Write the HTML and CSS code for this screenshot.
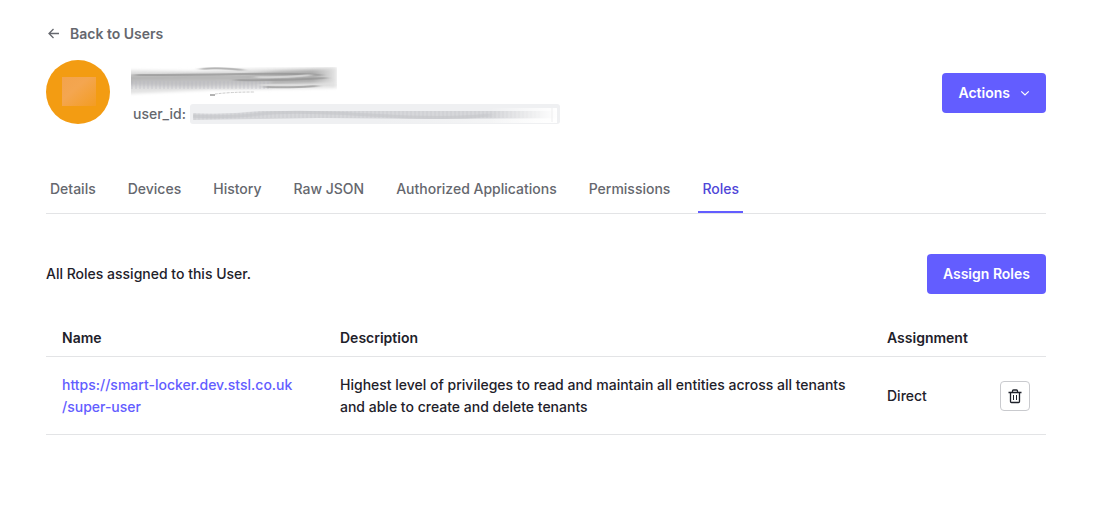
FILE: index.html
```html
<!DOCTYPE html>
<html lang="en">
<head>
<meta charset="utf-8">
<title>User roles</title>
<link rel="stylesheet" href="styles.css">
</head>
<body>
<main class="page">
  <a class="back" href="#">
    <svg class="back-icon" viewBox="0 0 16 16" aria-hidden="true"><path d="M13 7.500H3M7.500 3L3 7.500l4.500 4.500"/></svg>
    Back to Users
  </a>

  <header class="profile">
    <div class="avatar">
      <svg viewBox="0 0 64 64" aria-hidden="true">
        <defs>
          <linearGradient id="patch" x1="0" y1="0" x2="1" y2="1">
            <stop offset="0" stop-color="#f3a34c"/>
            <stop offset=".4" stop-color="#f4a650"/>
            <stop offset="1" stop-color="#f39c22"/>
          </linearGradient>
        </defs>
        <rect x="16" y="17" width="34" height="29" fill="url(#patch)"/>
      </svg>
    </div>
    <div class="identity">
      <svg class="name-smudge" viewBox="0 0 208 32" preserveAspectRatio="none" role="img" aria-label="Name hidden">
        <defs>
          <filter id="soft" filterUnits="userSpaceOnUse" x="-20" y="-10" width="250" height="52"><feGaussianBlur stdDeviation="2 1.500"/></filter>
          <filter id="fine" filterUnits="userSpaceOnUse" x="-20" y="-10" width="420" height="52"><feGaussianBlur stdDeviation="3 .7"/></filter>
          <linearGradient id="ink" x1="0" x2="1">
            <stop offset="0" stop-color="#b4b4b4"/>
            <stop offset=".5" stop-color="#b8b8b8"/>
            <stop offset=".9" stop-color="#acacac"/>
            <stop offset="1" stop-color="#dcdcdc"/>
          </linearGradient>
          <pattern id="ribs" width="4" height="8" patternUnits="userSpaceOnUse"><path d="M1 0V8" stroke="#b4b4be" stroke-width="1"/></pattern>
          <clipPath id="nameClip"><rect x="0" y="1" width="206" height="31"/></clipPath>
        </defs>
        <g clip-path="url(#nameClip)">
          <path d="M-6 4L60 5L110 3L206 1V22L150 23L80 24L-6 28Z" fill="#e2e2e2" filter="url(#soft)"/>
          <path d="M-6 9L60 8L110 8L150 5L202 3V16L150 18L60 20L-6 19Z" fill="url(#ink)" filter="url(#soft)"/>
          <path d="M0 14H140V22H0Z" fill="#cfcfd2" opacity=".5" filter="url(#soft)"/>
          <path d="M0 15H140V23H0Z" fill="url(#ribs)" opacity=".5"/>
          <path d="M70 3Q88 1 112 4" fill="none" stroke="#b5b5b5" stroke-width="2" filter="url(#fine)"/>
          <path d="M4 9Q60 9 110 8T190 9M105 14Q140 15 195 12" fill="none" stroke="#929292" stroke-width="2" opacity=".65" filter="url(#fine)"/>
          <path d="M125 11Q150 12 180 9M130 19H200" fill="none" stroke="#dedede" stroke-width="2" opacity=".8" filter="url(#fine)"/>
          <path d="M135 21Q160 22 186 20" fill="none" stroke="#777" stroke-width="2" opacity=".7" stroke-dasharray="3 1" filter="url(#fine)"/>
          <path d="M79 29H84" stroke="#666" stroke-width="1"/>
          <path d="M84 28Q100 26 124 26" fill="none" stroke="#ccc" stroke-width="1" stroke-dasharray="3 1"/>
        </g>
      </svg>
      <div class="id-row">
        <span>user_id:</span>
        <span class="id-chip">
          <svg viewBox="0 0 370 20" preserveAspectRatio="none" role="img" aria-label="User ID hidden">
            <defs>
              <linearGradient id="fade" x1="0" x2="1">
                <stop offset="0" stop-color="#fff" stop-opacity="0"/>
                <stop offset="1" stop-color="#fff"/>
              </linearGradient>
              <linearGradient id="under" x1="0" x2="1">
                <stop offset="0" stop-color="#f1f2f3" stop-opacity="0"/>
                <stop offset="1" stop-color="#fafafa"/>
              </linearGradient>
              <pattern id="idRibs" width="4" height="8" patternUnits="userSpaceOnUse"><path d="M1 0V8" stroke="#b9bac0" stroke-width="1"/></pattern>
              <clipPath id="idClip"><rect x="3" y="3" width="364" height="16"/></clipPath>
            </defs>
            <g clip-path="url(#idClip)">
              <path d="M180 15H366V19H180Z" fill="url(#under)"/>
              <path d="M-3 9Q35 11 70 7H366V14L240 15L130 14L70 15L-3 16Z" fill="#d6d7da" filter="url(#fine)"/>
              <path d="M3 9Q35 11 70 7H350V14H70L3 16Z" fill="url(#idRibs)" opacity=".35"/>
              <path d="M-3 12Q40 14 70 10T180 11T300 11" fill="none" stroke="#c5c6ca" stroke-width="3" opacity=".6" filter="url(#fine)"/>
              <rect x="300" y="4" width="67" height="15" fill="url(#fade)"/>
              <path d="M362 4V18" stroke="#eeeeef" stroke-width="1"/>
            </g>
          </svg>
        </span>
      </div>
    </div>
    <button class="button" type="button">
      Actions
      <svg class="chevron" viewBox="0 0 12 12" aria-hidden="true"><path d="M1.500 4L6 8.300 10.500 4"/></svg>
    </button>
  </header>

  <nav class="tabs" aria-label="User sections">
    <a class="tab" href="#">Details</a>
    <a class="tab" href="#">Devices</a>
    <a class="tab" href="#">History</a>
    <a class="tab" href="#">Raw JSON</a>
    <a class="tab" href="#">Authorized Applications</a>
    <a class="tab" href="#">Permissions</a>
    <a class="tab tab-active" href="#" aria-current="page">Roles</a>
  </nav>

  <div class="toolbar">
    <p class="toolbar-text">All Roles assigned to this User.</p>
    <button class="button" type="button">Assign Roles</button>
  </div>

  <table class="roles">
    <colgroup><col class="col-name"><col><col class="col-assignment"><col class="col-action"></colgroup>
    <thead>
      <tr><th scope="col">Name</th><th scope="col">Description</th><th scope="col">Assignment</th><td></td></tr>
    </thead>
    <tbody>
      <tr>
        <td><a class="role-link" href="#">https://smart-locker.dev.stsl.co.uk<wbr>/super-user</a></td>
        <td>Highest level of privileges to read and maintain all entities across all tenants and able to create and delete tenants</td>
        <td>Direct</td>
        <td>
          <button class="delete" type="button" aria-label="Remove role">
            <svg viewBox="0 0 16 16" aria-hidden="true"><path d="M1.500 4.500h13M5.500 4.500V3Q5.500 2 6.500 2H9.500Q10.500 2 10.500 3V4.500M3.500 4.500V13.500Q3.500 14.500 4.500 14.500H11.500Q12.500 14.500 12.500 13.500V4.500"/><path class="thin" d="M6.500 7v5M9.500 7v5"/></svg>
          </button>
        </td>
      </tr>
    </tbody>
  </table>
</main>
</body>
</html>
```

FILE: styles.css
```css
* {
  box-sizing: border-box;
}

body {
  margin: 0;
  background: #fff;
  color: #1e212a;
  font: 500 14px/22px Inter, "Liberation Sans", sans-serif;
}

a {
  color: inherit;
  text-decoration: none;
}

.page {
  padding: 23px 59px 32px 46px;
}

.back {
  display: flex;
  align-items: center;
  gap: 8px;
  width: fit-content;
  color: #65676e;
  font-weight: 600;
}

.back-icon {
  width: 16px;
  height: 16px;
  fill: none;
  stroke: #65676e;
  stroke-width: 1.3;
}

.profile {
  display: flex;
  align-items: center;
  gap: 21px;
  margin-top: 15px;
}

.avatar {
  flex: none;
  align-self: flex-start;
  width: 64px;
  height: 64px;
  border-radius: 50%;
  background: #f39c12;
}

.avatar svg {
  display: block;
}

.identity {
  flex: 1;
  min-width: 0;
  padding: 6px 0 1px;
}

.name-smudge {
  display: block;
  width: 208px;
  max-width: 100%;
  height: 32px;
}

.id-row {
  display: flex;
  align-items: center;
  gap: 4px;
  margin-top: 5px;
  padding-left: 2px;
  color: #65676e;
}

.id-chip {
  flex: 0 1 370px;
  height: 20px;
  border-radius: 3px;
  background: #eff0f2;
  overflow: hidden;
}

.id-chip svg {
  display: block;
  width: 100%;
  height: 20px;
}

.button {
  display: inline-flex;
  flex: none;
  align-items: center;
  gap: 10px;
  height: 40px;
  padding: 0 16px;
  border: 0;
  border-radius: 4px;
  background: #635dff;
  color: #fff;
  font: inherit;
  font-weight: 600;
}

.chevron {
  width: 10px;
  height: 10px;
  fill: none;
  stroke: #fff;
  stroke-width: 1.5;
}

.tabs {
  display: flex;
  gap: 24px;
  margin-top: 40px;
  border-bottom: 1px solid #e3e4e6;
}

.tab {
  padding: 12px 4px 11px;
  border-bottom: 2px solid transparent;
  color: #65676e;
}

.tab-active {
  border-color: #635dff;
  color: #4f46d8;
}

.toolbar {
  display: flex;
  align-items: center;
  justify-content: space-between;
  margin-top: 40px;
}

.toolbar-text {
  margin: 0;
}

.roles {
  width: 100%;
  margin-top: 24px;
  border-collapse: collapse;
  table-layout: fixed;
}

.col-name {
  width: 278px;
}

.col-assignment {
  width: 113px;
}

.col-action {
  width: 62px;
}

.roles th,
.roles td {
  padding: 9px 16px 7px;
  border-bottom: 1px solid #e3e4e6;
  text-align: left;
  vertical-align: middle;
}

.roles th {
  font-weight: 600;
}

.roles tbody td {
  padding-top: 17px;
  padding-bottom: 16px;
  height: 78px;
}

.role-link {
  color: #635dff;
}

.delete {
  display: flex;
  align-items: center;
  justify-content: center;
  width: 30px;
  height: 30px;
  padding: 0;
  border: 1px solid #c9cace;
  border-radius: 4px;
  background: #fff;
}

.delete svg {
  width: 16px;
  height: 16px;
  fill: none;
  stroke: #1e212a;
  stroke-width: 1.3;
}

.delete .thin {
  stroke-width: 1;
}
```
